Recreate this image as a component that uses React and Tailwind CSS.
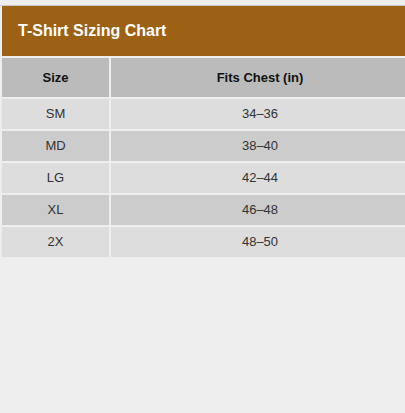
export default function App() {
  const rows = [
    ["SM", "34–36"],
    ["MD", "38–40"],
    ["LG", "42–44"],
    ["XL", "46–48"],
    ["2X", "48–50"],
  ];
  return (
    <div className="min-h-[413px] w-[405px] overflow-hidden bg-[#eeeeee] font-['Liberation_Sans',Arial,sans-serif]">
      <div className="h-[5px]" />
      <div className="h-px bg-[#c9c9c9]" />
      <div className="flex w-[409px] flex-col gap-[2px] pl-[2px]">
        <div className="flex h-[50px] items-center bg-[#9c6114] pl-4 text-[16px] font-bold text-white">
          T-Shirt Sizing Chart
        </div>
        <div className="flex h-[39px] gap-[2px] text-[13px] font-bold text-[#111111]">
          <div className="flex w-[107px] items-center justify-center bg-[#bbbbbb]">Size</div>
          <div className="flex flex-1 items-center justify-center bg-[#bbbbbb]">Fits Chest (in)</div>
        </div>
        {rows.map(([s, c], i) => (
          <div key={s} className="flex h-[30px] gap-[2px] text-[13px] text-[#333333]">
            <div className={`flex w-[107px] items-center justify-center ${i % 2 === 0 ? "bg-[#dddddd]" : "bg-[#cccccc]"}`}>{s}</div>
            <div className={`flex flex-1 items-center justify-center ${i % 2 === 0 ? "bg-[#dddddd]" : "bg-[#cccccc]"}`}>{c}</div>
          </div>
        ))}
      </div>
    </div>
  );
}
